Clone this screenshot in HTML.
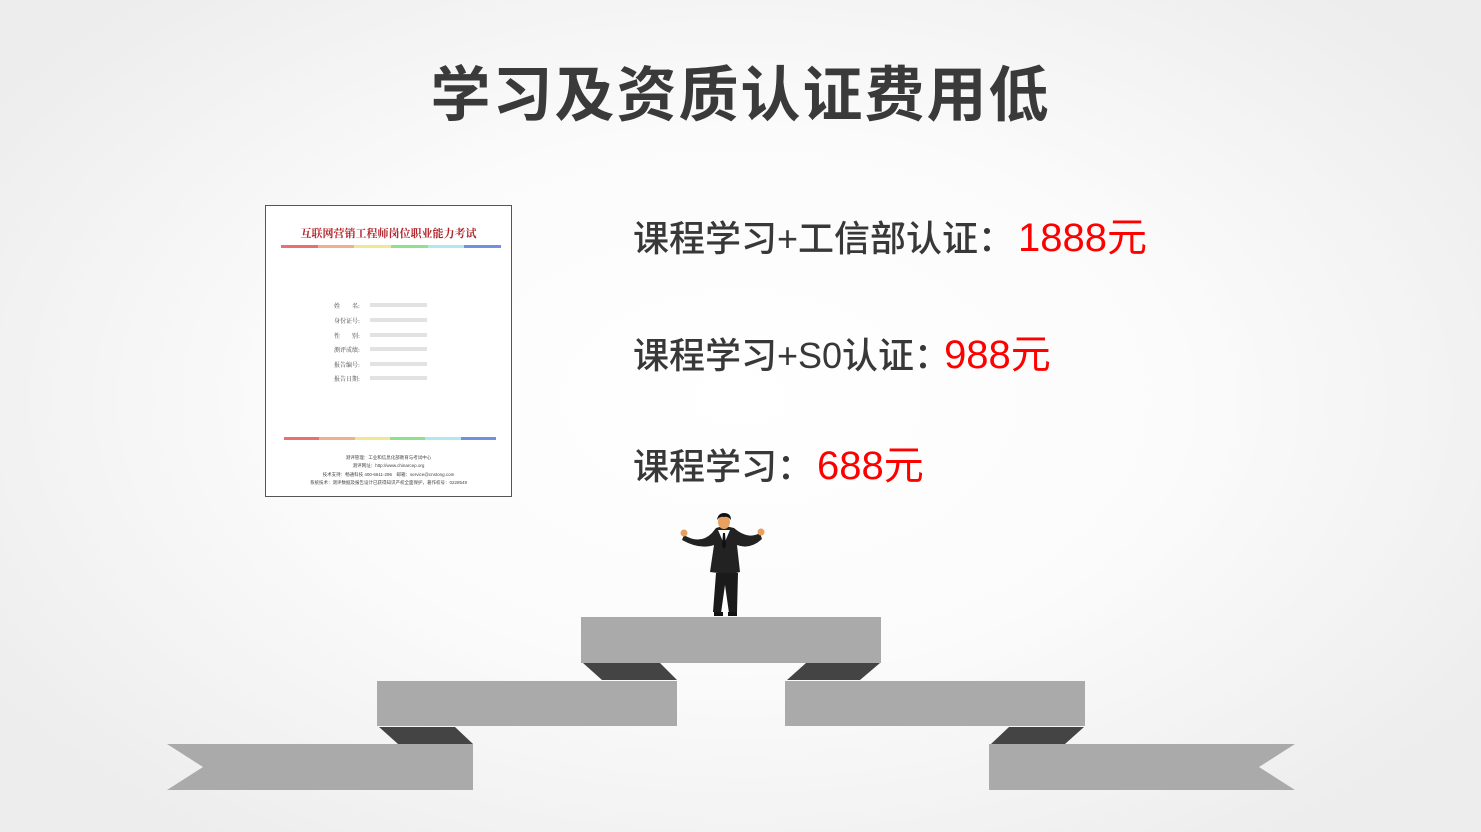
<!DOCTYPE html>
<html><head><meta charset="utf-8"><style>
html,body{margin:0;padding:0}
body{width:1481px;height:832px;overflow:hidden;position:relative;background:radial-gradient(ellipse 60% 65% at 50% 48%,#ffffff 0%,#fbfbfb 50%,#ededed 100%);font-family:"Liberation Sans","Noto Sans CJK SC",sans-serif}
.t{position:absolute;left:0;width:1481px;text-align:center;top:56px;font-size:60px;font-weight:bold;color:#3a3a3a;letter-spacing:2px;line-height:80px}
.l{position:absolute;left:633px;font-size:36px;color:#383838;line-height:44px;white-space:nowrap;font-weight:500}
.l span{color:#ff0000;font-weight:normal;font-size:40px}
.doc{position:absolute;left:265px;top:205px;width:245px;height:290px;background:#fff;border:1px solid #555}
.dt{position:absolute;top:19px;left:0;width:245px;text-align:center;font-family:"Noto Serif CJK SC",serif;font-size:11px;color:#b0232a;font-weight:bold}
.bar{position:absolute;height:3px;display:flex}
.bar i{flex:1;display:block}
.row{position:absolute;left:68px;font-size:6px;color:#444;font-family:"Noto Serif CJK SC",serif}
.row b{position:absolute;left:36px;top:2px;width:57px;height:4px;background:#e2e2e2}
.ft{position:absolute;left:0;width:245px;text-align:center;font-size:4.5px;color:#444}
</style></head><body>
<div class="t">学习及资质认证费用低</div>
<div class="l" style="top:216px">课程学习+工信部认证：<span style="margin-left:4px">1888元</span></div>
<div class="l" style="top:333px">课程学习+S0认证：<span style="margin-left:-6px">988元</span></div>
<div class="l" style="top:444px">课程学习：<span style="margin-left:4px">688元</span></div>
<div class="doc">
<div class="dt">互联网营销工程师岗位职业能力考试</div>
<div class="bar" style="top:39px;left:15px;width:220px"><i style="background:#e87070"></i><i style="background:#f0b090"></i><i style="background:#f0e890"></i><i style="background:#90e090"></i><i style="background:#b0e8f0"></i><i style="background:#7090e0"></i></div>
<div class="row" style="top:95px">姓　　名:<b></b></div>
<div class="row" style="top:110px">身份证号:<b></b></div>
<div class="row" style="top:125px">性　　别:<b></b></div>
<div class="row" style="top:139px">测评成绩:<b></b></div>
<div class="row" style="top:154px">报告编号:<b></b></div>
<div class="row" style="top:168px">报告日期:<b></b></div>
<div class="bar" style="top:231px;left:18px;width:212px"><i style="background:#e87070"></i><i style="background:#f0b090"></i><i style="background:#f0e890"></i><i style="background:#90e090"></i><i style="background:#b0e8f0"></i><i style="background:#7090e0"></i></div>
<div class="ft" style="top:249px">测评管理：工业和信息化部教育与考试中心</div>
<div class="ft" style="top:257px">测评网址：http://www.chinarcep.org</div>
<div class="ft" style="top:266px">技术支持：畅通科技 400-6611-296　邮箱：service@cnstong.com</div>
<div class="ft" style="top:274px">系统技术：测评数据及报告设计已获得知识产权全面保护，著作权号：0228549</div>
</div>
<svg style="position:absolute;left:0;top:0" width="1481" height="832">
<g fill="#444">
<polygon points="583,663 660,663 677,680 602,680"/>
<polygon points="806,663 880,663 860,680 787,680"/>
<polygon points="379,727 455,727 473,744 398,744"/>
<polygon points="1009,727 1084,727 1065,744 991,744"/>
</g>
<g fill="#aaaaaa">
<rect x="581" y="617" width="300" height="46"/>
<rect x="377" y="681" width="300" height="45"/>
<rect x="785" y="681" width="300" height="45"/>
<polygon points="167,744 473,744 473,790 167,790 203,767"/>
<polygon points="989,744 1295,744 1259,767 1295,790 989,790"/>
</g>
<g>
<path d="M684,535 Q700,545 712,533 L716,528 Q724,525 734,528 Q748,540 760,533 L762,539 Q750,550 737,545 L740,572 L728,575 L718,573 L710,572 L714,545 Q700,550 682,540 Z" fill="#222"/>
<path d="M716,573 L713,612 L721,613 L725,585 L729,613 L737,612 L738,573 Z" fill="#1a1a1a"/>
<rect x="714" y="612" width="9" height="4" fill="#111"/><rect x="728" y="612" width="9" height="4" fill="#111"/>
<path d="M718,530 L724,544 L730,530 Z" fill="#fff"/>
<path d="M723,533 L725,533 L726,546 L724,549 L722,546 Z" fill="#111"/>
<ellipse cx="724" cy="522" rx="6" ry="7" fill="#e8a060"/>
<path d="M717,520 Q718,513 724,513 Q731,513 731,520 Q728,516 724,517 Q720,516 717,520Z" fill="#111"/>
<circle cx="684" cy="533" r="3.5" fill="#e8a060"/><circle cx="761" cy="532" r="3.5" fill="#e8a060"/>
</g>
</svg>
</body></html>
